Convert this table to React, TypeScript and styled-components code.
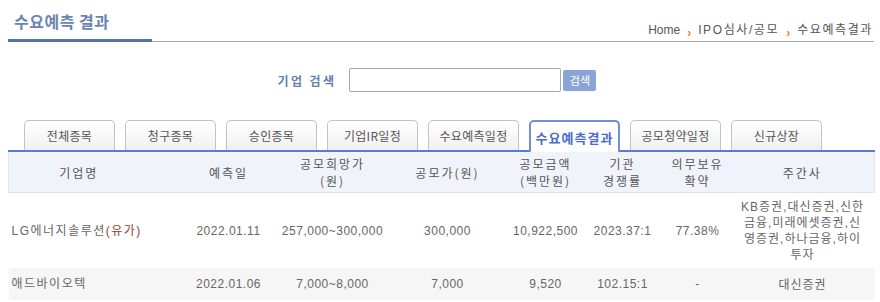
import styled, { createGlobalStyle } from "styled-components";

const GlobalStyle = createGlobalStyle`
  body {
    margin: 0;
    background: #fff;
    font-family: "Liberation Sans", "Noto Sans CJK KR", sans-serif;
    color: #555;
  }
`;

const tabs = [
  "전체종목",
  "청구종목",
  "승인종목",
  "기업IR일정",
  "수요예측일정",
  "수요예측결과",
  "공모청약일정",
  "신규상장",
];

const columns = [
  { label: ["기업명"], width: 168, shift: 28 },
  { label: ["예측일"], width: 104 },
  { label: ["공모희망가", "(원)"], width: 104 },
  { label: ["공모가(원)"], width: 126 },
  { label: ["공모금액", "(백만원)"], width: 70 },
  { label: ["기관", "경쟁률"], width: 84 },
  { label: ["의무보유", "확약"], width: 66 },
  { label: ["주간사"], width: 144 },
];

const rows = [
  {
    name: "LG에너지솔루션",
    market: "(유가)",
    date: "2022.01.11",
    band: "257,000~300,000",
    price: "300,000",
    amount: "10,922,500",
    ratio: "2023.37:1",
    lockup: "77.38%",
    lead: "KB증권,대신증권,신한금융,미래에셋증권,신영증권,하나금융,하이투자",
  },
  {
    name: "애드바이오텍",
    market: "",
    date: "2022.01.06",
    band: "7,000~8,000",
    price: "7,000",
    amount: "9,520",
    ratio: "102.15:1",
    lockup: "-",
    lead: "대신증권",
  },
];

export default function App() {
  return (
    <>
      <GlobalStyle />
      <Page>
        <TitleBar>
          <Title>수요예측 결과</Title>
          <Breadcrumb>
            <span>Home</span>
            <Arrow>›</Arrow>
            <Crumb>IPO심사/공모</Crumb>
            <Arrow>›</Arrow>
            <Crumb>수요예측결과</Crumb>
          </Breadcrumb>
        </TitleBar>

        <SearchRow>
          <SearchLabel>기업 검색</SearchLabel>
          <SearchInput type="text" />
          <SearchButton type="button">검색</SearchButton>
        </SearchRow>

        <TabList>
          {tabs.map((tab) => (
            <Tab key={tab} $active={tab === "수요예측결과"}>
              {tab}
            </Tab>
          ))}
        </TabList>

        <Table>
          <colgroup>
            {columns.map((col, i) => (
              <col key={i} style={{ width: col.width }} />
            ))}
          </colgroup>
          <thead>
            <tr>
              {columns.map((col, i) => (
                <HeadCell key={i} $shift={col.shift ?? 0}>
                  {col.label.map((line) => (
                    <HeadLine key={line}>{line}</HeadLine>
                  ))}
                </HeadCell>
              ))}
            </tr>
          </thead>
          <tbody>
            {rows.map((row, i) => (
              <BodyRow key={row.name} $striped={i % 2 === 1}>
                <NameCell>
                  {row.name}
                  {row.market && <Market>{row.market}</Market>}
                </NameCell>
                <Cell>{row.date}</Cell>
                <Cell>{row.band}</Cell>
                <Cell>{row.price}</Cell>
                <Cell>{row.amount}</Cell>
                <Cell>{row.ratio}</Cell>
                <Cell>{row.lockup}</Cell>
                <LeadCell>{row.lead}</LeadCell>
              </BodyRow>
            ))}
          </tbody>
        </Table>
      </Page>
    </>
  );
}

const Page = styled.div`
  width: 866px;
  padding: 0 6px 0 8px;
`;

const TitleBar = styled.div`
  display: flex;
  justify-content: space-between;
  align-items: flex-end;
  height: 41px;
  border-bottom: 1px solid #a9a9a9;
`;

const Title = styled.h1`
  margin: 0 0 -1px;
  width: 138px;
  padding: 0 0 7px 6px;
  border-bottom: 3px solid #5673a8;
  font-family: "Noto Sans CJK KR", sans-serif;
  font-size: 16px;
  font-weight: 700;
  line-height: 22px;
  color: #6c84b2;
  letter-spacing: 0.5px;
`;

const Breadcrumb = styled.div`
  display: flex;
  align-items: center;
  gap: 7px;
  padding: 0 1px 3px 0;
  font-family: "Liberation Sans", "Noto Sans CJK KR", sans-serif;
  font-size: 12px;
  line-height: 16px;
  color: #555;
`;

const Crumb = styled.span`
  letter-spacing: 1.6px;
`;

const Arrow = styled.span`
  color: #ea7a3c;
  font-weight: 700;
  font-size: 12px;
  transform: translateY(3px);
`;

const SearchRow = styled.div`
  display: flex;
  justify-content: center;
  align-items: center;
  gap: 2px;
  margin-top: 26px;
  padding-right: 8px;
  height: 24px;
`;

const SearchLabel = styled.span`
  margin-right: 11px;
  font-family: "Noto Sans CJK KR", sans-serif;
  font-size: 12px;
  font-weight: 700;
  color: #6a7db4;
  letter-spacing: 2.4px;
`;

const SearchInput = styled.input`
  box-sizing: border-box;
  width: 212px;
  height: 24px;
  border: 1px solid #a8a8a8;
  border-radius: 2px;
  outline: none;
`;

const SearchButton = styled.button`
  width: 33px;
  height: 21px;
  padding: 0;
  border: none;
  border-radius: 2px;
  background: #8ba4d8;
  color: #fff;
  font-family: "Noto Sans CJK KR", sans-serif;
  font-size: 11px;
`;

const TabList = styled.div`
  display: flex;
  align-items: flex-end;
  gap: 10px;
  margin-top: 26px;
  padding-left: 16px;
  height: 32px;
`;

const Tab = styled.div<{ $active: boolean }>`
  box-sizing: border-box;
  flex: 0 0 91px;
  display: flex;
  justify-content: center;
  align-items: center;
  height: ${(p) => (p.$active ? "32px" : "30px")};
  border: ${(p) => (p.$active ? "2px solid #6f8fd8" : "1px solid #c3c3c3")};
  border-bottom: none;
  border-radius: 5px 5px 0 0;
  background: ${(p) =>
    p.$active ? "#fff" : "linear-gradient(#ffffff, #f0f0f0)"};
  margin-bottom: ${(p) => (p.$active ? "-2px" : "0")};
  position: relative;
  font-family: "Noto Sans CJK KR", sans-serif;
  font-size: ${(p) => (p.$active ? "13px" : "12px")};
  font-weight: ${(p) => (p.$active ? 700 : 400)};
  color: ${(p) => (p.$active ? "#4a6ccc" : "#555")};
  letter-spacing: ${(p) => (p.$active ? "1px" : "0.3px")};
`;

const Table = styled.table`
  width: 866px;
  table-layout: fixed;
  border-collapse: collapse;
  border-top: 2px solid #5b7bcf;
`;

const HeadCell = styled.th<{ $shift: number }>`
  height: 40px;
  padding: 0 ${(p) => p.$shift}px 0 0;
  background: #f1f3fb;
  border-bottom: 1px solid #dfe3ee;
  font-family: "Noto Sans CJK KR", sans-serif;
  font-size: 12px;
  font-weight: 400;
  color: #555;
  letter-spacing: 2px;
  text-align: center;
  &:first-child {
    border-left: 1px solid #dfe3ee;
  }
  &:last-child {
    border-right: 1px solid #dfe3ee;
  }
`;

const HeadLine = styled.div`
  height: 17px;
  line-height: 17px;
`;

const BodyRow = styled.tr<{ $striped: boolean }>`
  height: 32px;
  background: ${(p) => (p.$striped ? "#f6f6f6" : "#fff")};
`;

const Cell = styled.td`
  padding: 0;
  font-family: "Liberation Sans", "Noto Sans CJK KR", sans-serif;
  font-size: 12px;
  line-height: 16px;
  color: #666;
  letter-spacing: 0.5px;
  text-align: center;
  vertical-align: middle;
`;

const NameCell = styled(Cell)`
  padding-left: 3px;
  text-align: left;
  letter-spacing: 1.5px;
`;

const Market = styled.span`
  color: #9b3b32;
`;

const LeadCell = styled(Cell)`
  padding: 6px 9px 5px;
  letter-spacing: 1px;
  line-height: 16px;
  word-break: break-all;
`;
